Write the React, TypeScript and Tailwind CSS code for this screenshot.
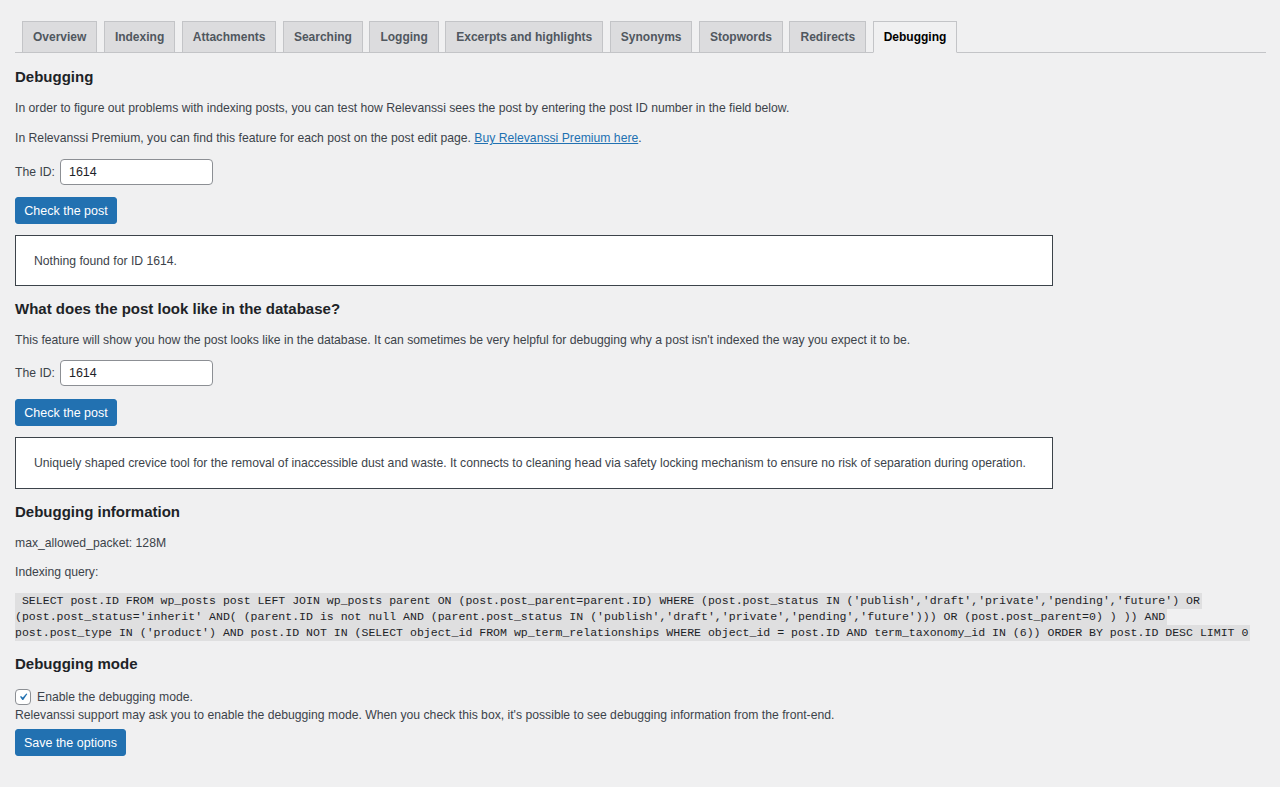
import React from "react";

const tabs = [
  "Overview",
  "Indexing",
  "Attachments",
  "Searching",
  "Logging",
  "Excerpts and highlights",
  "Synonyms",
  "Stopwords",
  "Redirects",
  "Debugging",
];

function IdRow({ mt }: { mt: string }) {
  return (
    <div className={`flex items-center ${mt}`}>
      <span className="mr-[5px]">The ID:</span>
      <div className="w-[153px] h-[26px] bg-white border border-[#8c8f94] rounded-[4px] pl-[8px] flex items-center text-[#1d2327] text-[12.5px]">
        1614
      </div>
    </div>
  );
}

function Button({ label, w, mt }: { label: string; w: string; mt: string }) {
  return (
    <div
      className={`${mt} h-[27px] ${w} bg-[#2271b1] border border-[#2271b1] rounded-[3px] text-white flex items-center justify-center text-[12.5px]`}
    >
      {label}
    </div>
  );
}

function Box({ children, h }: { children: React.ReactNode; h: string }) {
  return (
    <div className={`mt-[11px] w-[1038px] ${h} bg-white border border-[#3c434a] pl-[18px] flex items-center`}>
      {children}
    </div>
  );
}

const codeLines = [
  " SELECT post.ID FROM wp_posts post LEFT JOIN wp_posts parent ON (post.post_parent=parent.ID) WHERE (post.post_status IN ('publish','draft','private','pending','future') OR",
  "(post.post_status='inherit' AND( (parent.ID is not null AND (parent.post_status IN ('publish','draft','private','pending','future'))) OR (post.post_parent=0) ) )) AND",
  "post.post_type IN ('product') AND post.ID NOT IN (SELECT object_id FROM wp_term_relationships WHERE object_id = post.ID AND term_taxonomy_id IN (6)) ORDER BY post.ID DESC LIMIT 0",
];

export default function App() {
  return (
    <div
      className="min-h-screen w-full bg-[#f0f0f1] pl-[15px] pr-[14px] pb-[30px] text-[12.2px] leading-[18px] text-[#3c434a]"
      style={{ fontFamily: '"Liberation Sans", Arial, sans-serif' }}
    >
      {/* Tabs */}
      <div className="pt-[21px] flex items-end border-b border-[#c3c4c7]">
        {tabs.map((t) => {
          const active = t === "Debugging";
          return (
            <div
              key={t}
              className={`ml-[6.5px] first:ml-[7px] -mb-px px-[10px] py-[5px] leading-[20px] text-[12px] font-bold border border-[#c3c4c7] whitespace-nowrap ${
                active
                  ? "bg-[#f0f0f1] border-b-[#f0f0f1] text-[#000000]"
                  : "bg-[#dcdcde] text-[#50575e]"
              }`}
            >
              {t}
            </div>
          );
        })}
      </div>

      <h2 className="mt-[14px] text-[15px] leading-[20px] font-bold text-[#1d2327]">Debugging</h2>
      <p className="mt-[12px]">
        In order to figure out problems with indexing posts, you can test how Relevanssi sees the post by entering the post ID number in the field below.
      </p>
      <p className="mt-[12px]">
        In Relevanssi Premium, you can find this feature for each post on the post edit page.{" "}
        <span className="text-[#2271b1] underline">Buy Relevanssi Premium here</span>.
      </p>
      <IdRow mt="mt-[12px]" />
      <Button label="Check the post" w="w-[102px]" mt="mt-[12px]" />
      <Box h="h-[51px]">Nothing found for ID 1614.</Box>

      <h2 className="mt-[13px] text-[15px] leading-[20px] font-bold text-[#1d2327]">
        What does the post look like in the database?
      </h2>
      <p className="mt-[12px]">
        This feature will show you how the post looks like in the database. It can sometimes be very helpful for debugging why a post isn't indexed the way you expect it to be.
      </p>
      <IdRow mt="mt-[11px]" />
      <Button label="Check the post" w="w-[102px]" mt="mt-[13px]" />
      <Box h="h-[52px]">
        Uniquely shaped crevice tool for the removal of inaccessible dust and waste. It connects to cleaning head via safety locking mechanism to ensure no risk of separation during operation.
      </Box>

      <h2 className="mt-[13px] text-[15px] leading-[20px] font-bold text-[#1d2327]">Debugging information</h2>
      <p className="mt-[12px]">max_allowed_packet: 128M</p>
      <p className="mt-[11px]">Indexing query:</p>
      <div
        className="mt-[12px] text-[11.55px] leading-[16px] text-[#1d2327]"
        style={{ fontFamily: '"Liberation Mono", "DejaVu Sans Mono", monospace' }}
      >
        {codeLines.map((l, i) => (
          <div key={i} className="h-[16px]">
            <span className="inline-block h-[16px] bg-[rgba(0,0,0,0.07)] whitespace-pre pr-[2px]">{l}</span>
          </div>
        ))}
      </div>

      <h2 className="mt-[13px] text-[15px] leading-[20px] font-bold text-[#1d2327]">Debugging mode</h2>
      <div className="mt-[15px] flex items-center h-[16px]">
        <div className="w-[16px] h-[16px] bg-white border border-[#8c8f94] rounded-[4px] flex items-center justify-center">
          <svg width="16" height="16" viewBox="0 0 20 20">
            <path
              d="M14.83 4.89l1.34.94-5.81 8.38H9.02L5.78 9.67l1.34-1.25 2.57 2.4z"
              fill="#2271b1"
            />
          </svg>
        </div>
        <span className="ml-[6px]">Enable the debugging mode.</span>
      </div>
      <p className="mt-[1px]">
        Relevanssi support may ask you to enable the debugging mode. When you check this box, it's possible to see debugging information from the front-end.
      </p>
      <div className="mt-[5px] h-[27px] w-[111px] bg-[#2271b1] border border-[#2271b1] rounded-[3px] text-white flex items-center justify-center text-[12.5px]">
        Save the options
      </div>
    </div>
  );
}
